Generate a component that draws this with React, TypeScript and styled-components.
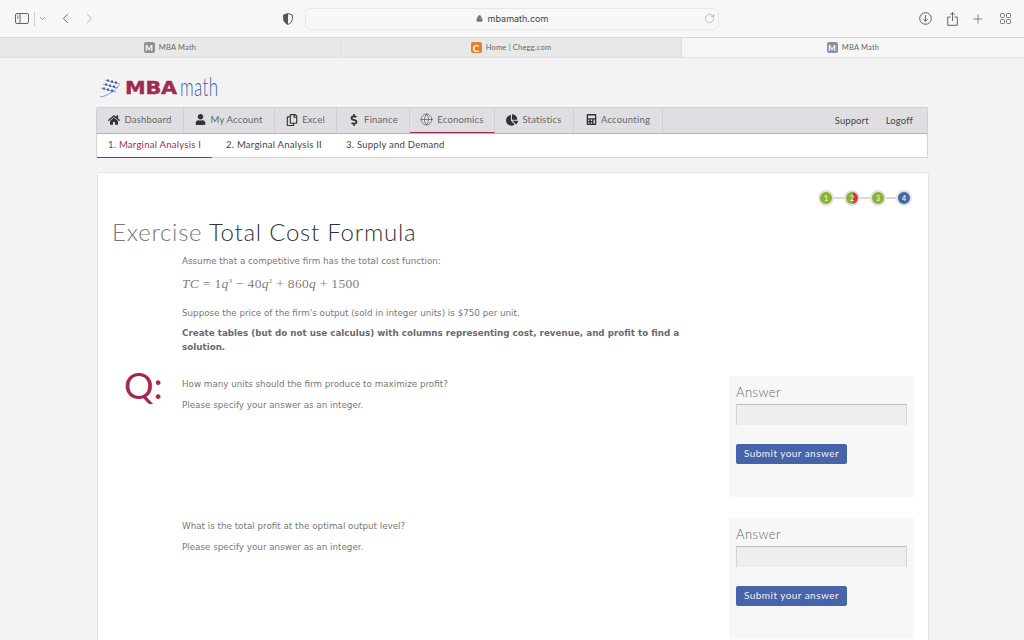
import styled, { createGlobalStyle } from 'styled-components'
import { ChevronDown, ChevronLeft, ChevronRight, Globe, Lock, Plus, RotateCw } from 'lucide-react'
import { FaCalculator, FaChartPie, FaDollarSign, FaHome, FaRegCopy, FaUser } from 'react-icons/fa'
import type { ReactNode } from 'react'

const GlobalStyle = createGlobalStyle`
    html, body {
        margin: 0;
        height: 640px;
        overflow: hidden;
        background: #f3f3f4;
        font-family: 'Lato', 'Liberation Sans', sans-serif;
    }
`

const Toolbar = styled.div`
    height: 37px;
    background: #f7f7f7;
    border-bottom: 1px solid #d8d8d8;
    display: grid;
    grid-template-columns: 280px 16px 423px 1fr;
    align-items: center;
    color: #555;
`

const ToolbarLeft = styled.div`
    display: flex;
    align-items: center;
    padding-left: 15px;
`

const SidebarDivider = styled.span`
    width: 1px;
    height: 14px;
    background: #ccc;
    margin: 0 3px 0 5px;
`

const ChromeButton = styled.span<{ $gap?: number; $faded?: boolean }>`
    display: inline-flex;
    margin-left: ${(p) => p.$gap ?? 0}px;
    color: ${(p) => (p.$faded ? '#aaa' : '#555')};
`

const ShieldSlot = styled.div`
    display: flex;
    justify-content: center;
`

const AddressBar = styled.div`
    height: 20px;
    margin-left: 9px;
    background: #f8f8f8;
    border: 1px solid #e8e8e8;
    border-radius: 6px;
    display: flex;
    align-items: center;
    justify-content: center;
    position: relative;
    font-size: 9px;
    font-family: 'Inter', 'Liberation Sans', sans-serif;
    color: #444;
    gap: 5px;
`

const ReloadIcon = styled.span`
    position: absolute;
    right: 3px;
    top: 4px;
    display: flex;
    color: #777;
`

const ToolbarRight = styled.div`
    display: flex;
    justify-content: flex-end;
    align-items: center;
    gap: 15px;
    padding-right: 13px;
`

const TabStrip = styled.div`
    height: 20px;
    display: grid;
    grid-template-columns: 341px 341px 1fr;
`

const Tab = styled.div<{ $active?: boolean }>`
    display: flex;
    align-items: center;
    justify-content: center;
    gap: 4px;
    font-size: 7.5px;
    letter-spacing: 0.2px;
    color: #666;
    background: ${(p) => (p.$active ? '#f6f6f6' : '#e8e8e8')};
    border-right: ${(p) => (p.$active ? 'none' : '1px solid #dedede')};
    border-bottom: 1px solid #e2e2e2;
    box-sizing: border-box;
`

const Favicon = styled.span<{ $chegg?: boolean }>`
    width: 11px;
    height: 11px;
    border-radius: 2px;
    background: ${(p) => (p.$chegg ? '#e87d2b' : '#8f8f99')};
    color: #fff;
    font-size: ${(p) => (p.$chegg ? '10px' : '8px')};
    font-weight: 700;
    display: flex;
    align-items: center;
    justify-content: center;
`

const Page = styled.main`
    padding: 11px 96px 0 96px;
`

const LogoRow = styled.div`
    height: 37px;
    display: flex;
    align-items: center;
    padding-left: 3px;
`

const LogoBold = styled.span`
    font-family: 'DejaVu Sans', sans-serif;
    font-weight: 700;
    font-size: 17px;
    color: #a12a52;
    letter-spacing: -0.2px;
    transform: scaleX(1.22);
    transform-origin: left;
    width: 55px;
    margin-left: 4px;
    -webkit-text-stroke: 0.4px #a12a52;
`

const LogoThin = styled.span`
    font-size: 25px;
    font-weight: 300;
    color: #3e5ea8;
    transform: scaleX(0.68);
    transform-origin: left;
    letter-spacing: 0.5px;
    position: relative;
    top: -2px;
`

const NavBar = styled.nav`
    margin-top: 1px;
    height: 27px;
    background: #dfdfe3;
    border: 1px solid #d2d2d4;
    border-bottom: 1px solid #b5b5b8;
    box-sizing: border-box;
    display: flex;
    border-radius: 2px 2px 0 0;
`

const NavItem = styled.div<{ $active?: boolean; $width: number }>`
    width: ${(p) => p.$width}px;
    box-sizing: border-box;
    display: flex;
    align-items: center;
    justify-content: center;
    gap: 4px;
    font-size: 9.5px;
    letter-spacing: 0.2px;
    color: #666;
    border-right: 1px solid #d0d0d3;
    border-bottom: ${(p) => (p.$active ? '1px solid #a12a52' : 'none')};
    padding-bottom: 2px;

    svg {
        color: #333;
        flex-shrink: 0;
    }
`

const NavSpacer = styled.div`
    flex: 1;
`

const NavLink = styled.a`
    font-size: 9.5px;
    color: #444;
    align-self: center;
    margin-left: 17px;
    letter-spacing: 0.1px;

    &:last-child {
        margin-right: 14px;
    }
`

const SubNav = styled.div`
    height: 24px;
    background: #fff;
    border: 1px solid #d4d4d4;
    border-top: none;
    box-sizing: border-box;
    display: flex;
    border-radius: 0 0 2px 2px;
`

const SubItem = styled.div<{ $active?: boolean; $width: number }>`
    width: ${(p) => p.$width}px;
    box-sizing: border-box;
    padding-left: ${(p) => (p.$active ? 11 : 14)}px;
    font-size: 9.5px;
    letter-spacing: 0.25px;
    line-height: 22px;
    color: ${(p) => (p.$active ? '#a12a52' : '#444')};
    border-bottom: ${(p) => (p.$active ? '1px solid #a12a52' : 'none')};
    height: 24px;
`

const Card = styled.section`
    margin: 14px -1px 0 1px;
    background: #fff;
    border: 1px solid #e3e3e3;
    border-radius: 3px 3px 0 0;
    padding: 0 14px;
    height: 480px;
`

const Stepper = styled.div`
    height: 51px;
    box-sizing: border-box;
    padding: 0 2px 2px 0;
    display: flex;
    align-items: center;
    justify-content: flex-end;
`

const Step = styled.span<{ $color: string }>`
    width: 12px;
    height: 12px;
    border-radius: 50%;
    background: ${(p) => p.$color};
    border: 2px solid #e2e2e2;
    color: #e8f0d8;
    font-size: 7px;
    font-weight: 700;
    display: flex;
    align-items: center;
    justify-content: center;
`

const StepLine = styled.span`
    width: 10px;
    height: 2px;
    background: #d6d6d6;
`

const Title = styled.h1`
    margin: -2px 0 0;
    height: 24px;
    line-height: 20px;
    font-size: 24px;
    font-weight: 300;
    letter-spacing: 0.75px;
    color: #333;
`

const TitleLead = styled.span`
    color: #777;
    font-weight: 300;
`

const Intro = styled.div`
    padding-left: 70px;
    width: 510px;
    margin-top: 8px;
`

const Paragraph = styled.p<{ $bold?: boolean; $after?: number }>`
    margin: 0 0 ${(p) => p.$after ?? 0}px;
    font-family: 'DejaVu Sans', sans-serif;
    font-size: 8.75px;
    line-height: 14px;
    color: ${(p) => (p.$bold ? '#6a6a6a' : '#777')};
    font-weight: ${(p) => (p.$bold ? 700 : 400)};
`

const Formula = styled.div`
    font-family: 'Liberation Serif', serif;
    font-size: 13.5px;
    letter-spacing: 0.3px;
    line-height: 16px;
    color: #808080;
    margin-bottom: 14px;

    i {
        font-style: italic;
    }

    sup {
        font-size: 7px;
        line-height: 0;
    }
`

const QuestionRow = styled.div`
    display: grid;
    grid-template-columns: 70px 1fr 185px;
    height: 121px;
    margin-bottom: 21px;
`

const QuestionMark = styled.div`
    font-size: 37px;
    line-height: 18px;
    color: #a12a52;
    padding-left: 12px;
`

const QuestionText = styled.div`
    padding-top: 1px;
`

const AnswerPanel = styled.div`
    background: #f7f7f7;
    padding: 7px;
    box-sizing: border-box;
`

const AnswerLabel = styled.div`
    font-size: 13px;
    font-weight: 300;
    letter-spacing: 0.45px;
    line-height: 19px;
    color: #666;
`

const AnswerInput = styled.div`
    height: 21px;
    margin-top: 2px;
    background: #eeeeee;
    border: 1px solid #d4d4d4;
    border-top-color: #bcbcbc;
    border-bottom: none;
    box-sizing: border-box;
`

const SubmitButton = styled.button`
    display: block;
    margin-top: 19px;
    width: 111px;
    height: 20px;
    padding: 0 0 2px;
    border: none;
    border-radius: 2px;
    background: #4763aa;
    color: #f2f2f8;
    font-family: inherit;
    font-size: 10px;
    letter-spacing: 0.45px;
`

const SidebarIcon = () => (
    <svg width="14" height="11" viewBox="0 0 14 11" fill="none" stroke="#666" strokeWidth="1">
        <rect x="0.5" y="0.5" width="13" height="10" rx="1.5" />
        <path d="M5 0.5v10M2 3h1.5M2 5h1.5" />
    </svg>
)

const ShieldIcon = () => (
    <svg width="10" height="12" viewBox="0 0 10 12">
        <path d="M5 .6 9.4 2v3.6c0 2.9-1.9 4.9-4.4 5.8C2.5 10.5.6 8.5.6 5.6V2Z" fill="none" stroke="#555" />
        <path d="M5 .6V11.4C2.5 10.5.6 8.5.6 5.6V2Z" fill="#555" />
    </svg>
)

const DownloadIcon = () => (
    <svg width="13" height="13" viewBox="0 0 13 13" fill="none" stroke="#555" strokeWidth="0.9">
        <circle cx="6.5" cy="6.5" r="5.8" />
        <path d="M6.5 3.2v6M4.2 7l2.3 2.3L8.8 7" />
    </svg>
)

const ShareIcon = () => (
    <svg width="11" height="14" viewBox="0 0 11 14" fill="none" stroke="#555" strokeWidth="0.9">
        <path d="M3.5 5H.7v8.3h9.6V5H7.5M5.5 9V.8M3.3 2.8 5.5.7l2.2 2.1" />
    </svg>
)

const TabsIcon = () => (
    <svg width="11" height="11" viewBox="0 0 11 11" fill="none" stroke="#666" strokeWidth="0.9">
        <rect x="0.5" y="0.5" width="4" height="4" rx="1" />
        <rect x="6.5" y="0.5" width="4" height="4" rx="1" />
        <rect x="0.5" y="6.5" width="4" height="4" rx="1" />
        <rect x="6.5" y="6.5" width="4" height="4" rx="1" />
    </svg>
)

// the little tilted abacus next to the logo
const LogoMark = () => (
    <svg width="22" height="22" viewBox="0 0 22 22" fill="none" stroke="#3e5ea8">
        <path d="M6 3 21 7M4 7l15 4M2 11l15 4M1 20c8-1 15-6 19-12" strokeWidth="0.6" />
        <path d="M8 3.500h2M12 4.600h2M16 5.600h2M6 7.500h2M10 8.600h2M14 9.600h2M4 11.500h2M8 12.600h2M12 13.600h2" strokeWidth="2.200" />
    </svg>
)

const navItems: { label: string; width: number; icon: ReactNode; active?: boolean }[] = [
    { label: 'Dashboard', width: 87, icon: <FaHome size={12} /> },
    { label: 'My Account', width: 91, icon: <FaUser size={11} /> },
    { label: 'Excel', width: 62, icon: <FaRegCopy size={12} /> },
    { label: 'Finance', width: 73, icon: <FaDollarSign size={12} /> },
    { label: 'Economics', width: 85, icon: <Globe size={13} strokeWidth={1} />, active: true },
    { label: 'Statistics', width: 79, icon: <FaChartPie size={12} /> },
    { label: 'Accounting', width: 89, icon: <FaCalculator size={11} /> },
]

const questions = ['How many units should the firm produce to maximize profit?', 'What is the total profit at the optimal output level?']

const App = () => {
    return (
        <>
            <GlobalStyle />
            <Toolbar>
                <ToolbarLeft>
                    <SidebarIcon />
                    <SidebarDivider />
                    <ChromeButton>
                        <ChevronDown size={9} strokeWidth={1.5} />
                    </ChromeButton>
                    <ChromeButton $gap={10}>
                        <ChevronLeft size={17} strokeWidth={1.2} />
                    </ChromeButton>
                    <ChromeButton $gap={7} $faded>
                        <ChevronRight size={17} strokeWidth={1.2} />
                    </ChromeButton>
                </ToolbarLeft>
                <ShieldSlot>
                    <ShieldIcon />
                </ShieldSlot>
                <AddressBar>
                    <Lock size={7} fill="#777" color="#777" />
                    mbamath.com
                    <ReloadIcon>
                        <RotateCw size={11} strokeWidth={1} />
                    </ReloadIcon>
                </AddressBar>
                <ToolbarRight>
                    <DownloadIcon />
                    <ShareIcon />
                    <ChromeButton $gap={-2}>
                        <Plus size={14} strokeWidth={1.2} />
                    </ChromeButton>
                    <TabsIcon />
                </ToolbarRight>
            </Toolbar>
            <TabStrip>
                <Tab>
                    <Favicon>M</Favicon>
                    MBA Math
                </Tab>
                <Tab>
                    <Favicon $chegg>C</Favicon>
                    Home | Chegg.com
                </Tab>
                <Tab $active>
                    <Favicon>M</Favicon>
                    MBA Math
                </Tab>
            </TabStrip>
            <Page>
                <LogoRow>
                    <LogoMark />
                    <LogoBold>MBA</LogoBold>
                    <LogoThin>math</LogoThin>
                </LogoRow>
                <NavBar>
                    {navItems.map((item) => (
                        <NavItem key={item.label} $width={item.width} $active={item.active}>
                            {item.icon}
                            {item.label}
                        </NavItem>
                    ))}
                    <NavSpacer />
                    <NavLink>Support</NavLink>
                    <NavLink>Logoff</NavLink>
                </NavBar>
                <SubNav>
                    <SubItem $active $width={115}>
                        1. Marginal Analysis I
                    </SubItem>
                    <SubItem $width={120}>2. Marginal Analysis II</SubItem>
                    <SubItem $width={130}>3. Supply and Demand</SubItem>
                </SubNav>
                <Card>
                    <Stepper>
                        <Step $color="#8ab42e">1</Step>
                        <StepLine />
                        <Step $color="linear-gradient(90deg, #8ab42e 62%, #d9383a 62%)">2</Step>
                        <StepLine />
                        <Step $color="#8ab42e">3</Step>
                        <StepLine />
                        <Step $color="#4763aa">4</Step>
                    </Stepper>
                    <Title>
                        <TitleLead>Exercise</TitleLead> Total Cost Formula
                    </Title>
                    <Intro>
                        <Paragraph $after={8}>Assume that a competitive firm has the total cost function:</Paragraph>
                        <Formula>
                            <i>TC</i> = 1<i>q</i>
                            <sup>3</sup> − 40<i>q</i>
                            <sup>2</sup> + 860<i>q</i> + 1500
                        </Formula>
                        <Paragraph $after={6}>Suppose the price of the firm's output (sold in integer units) is $750 per unit.</Paragraph>
                        <Paragraph $bold $after={22}>
                            Create tables (but do not use calculus) with columns representing cost, revenue, and profit to find a solution.
                        </Paragraph>
                    </Intro>
                    {questions.map((question, index) => (
                        <QuestionRow key={question}>
                            <QuestionMark>{index === 0 ? 'Q:' : ''}</QuestionMark>
                            <QuestionText>
                                <Paragraph $after={7}>{question}</Paragraph>
                                <Paragraph>Please specify your answer as an integer.</Paragraph>
                            </QuestionText>
                            <AnswerPanel>
                                <AnswerLabel>Answer</AnswerLabel>
                                <AnswerInput />
                                <SubmitButton>Submit your answer</SubmitButton>
                            </AnswerPanel>
                        </QuestionRow>
                    ))}
                </Card>
            </Page>
        </>
    )
}

export default App
